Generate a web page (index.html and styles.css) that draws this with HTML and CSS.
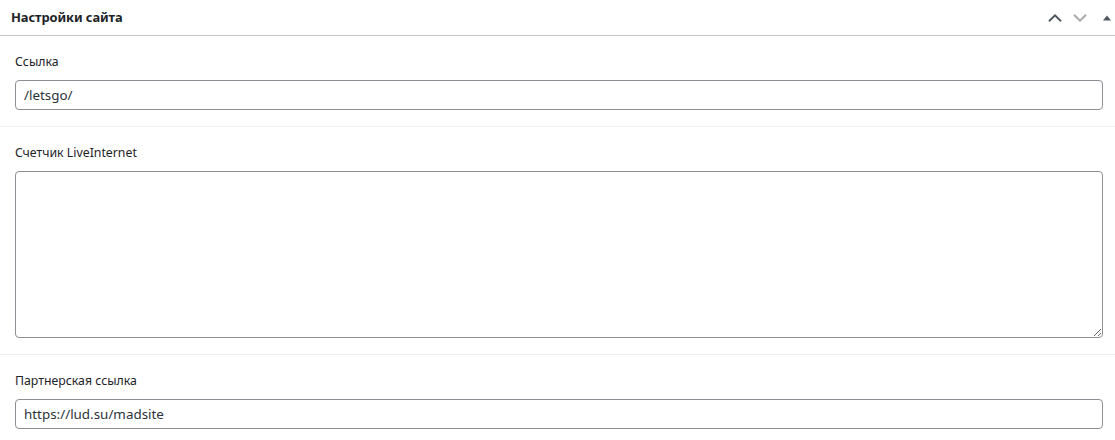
FILE: index.html
```html
<!DOCTYPE html>
<html lang="ru">
<head>
<meta charset="utf-8">
<title>Настройки сайта</title>
<link rel="stylesheet" href="styles.css">
</head>
<body>
<div class="postbox">
  <div class="postbox-header">
    <h2 class="postbox-title">Настройки сайта</h2>
    <div class="handle-actions">
      <button class="handle-btn" type="button" aria-label="Вверх">
        <svg width="14" height="8" viewBox="0 0 14 8"><path d="M1 7.2 L7 1.4 L13 7.2" fill="none" stroke="#50575e" stroke-width="2"/></svg>
      </button>
      <button class="handle-btn" type="button" aria-label="Вниз">
        <svg width="14" height="8" viewBox="0 0 14 8"><path d="M1 0.8 L7 6.6 L13 0.8" fill="none" stroke="#a7aaad" stroke-width="2"/></svg>
      </button>
      <button class="handle-btn toggle" type="button" aria-label="Свернуть">
        <svg width="8" height="6" viewBox="0 0 8 6"><path d="M0 5.5 L4 0.5 L8 5.5 Z" fill="#50575e"/></svg>
      </button>
    </div>
  </div>
  <div class="inside">
    <div class="field">
      <label class="field-label" for="f1">Ссылка</label>
      <input class="text-input" id="f1" type="text" value="/letsgo/">
    </div>
    <div class="field">
      <label class="field-label" for="f2">Счетчик LiveInternet</label>
      <textarea class="text-area" id="f2"></textarea>
    </div>
    <div class="field">
      <label class="field-label" for="f3">Партнерская ссылка</label>
      <input class="text-input" id="f3" type="text" value="https://lud.su/madsite">
    </div>
  </div>
</div>
</body>
</html>
```

FILE: styles.css
```css
html, body {
  margin: 0;
  padding: 0;
  background: #ffffff;
}
body {
  font-family: "Noto Sans", "Open Sans", sans-serif;
  color: #1d2327;
  width: 1115px;
  overflow: hidden;
}
.postbox {
  display: flex;
  flex-direction: column;
}
.postbox-header {
  height: 35px;
  border-bottom: 1px solid #c3c4c7;
  display: flex;
  align-items: center;
  justify-content: space-between;
  padding: 0 4px 0 11px;
}
.postbox-title {
  margin: 0;
  font-size: 12.9px;
  font-weight: 700;
  color: #1d2327;
  line-height: 1.4;
  letter-spacing: -0.1px;
}
.handle-actions {
  display: flex;
  align-items: center;
  height: 100%;
}
.handle-btn {
  border: 0;
  background: transparent;
  padding: 0;
  margin: 0 0 0 11px;
  height: 35px;
  display: flex;
  align-items: center;
  justify-content: center;
  cursor: pointer;
}
.handle-btn svg { display: block; }
.handle-btn.toggle { margin-left: 16px; }
.inside {
  display: flex;
  flex-direction: column;
}
.field {
  display: flex;
  flex-direction: column;
  padding: 16px 12px 16px 15px;
  border-top: 1px solid #eeeeee;
}
.field:first-child { border-top: 0; }
.field-label {
  font-size: 12.3px;
  line-height: 18px;
  color: #1d2327;
  padding-top: 1px;
  margin-bottom: 9px;
}
.text-input {
  box-sizing: border-box;
  width: 100%;
  height: 30px;
  margin: 0;
  padding: 0 8px;
  border: 1px solid #8c8f94;
  border-radius: 4px;
  font-family: "Noto Sans", "Open Sans", sans-serif;
  font-size: 13.4px;
  color: #2c3338;
  background: #fff;
  outline: none;
}
.text-area {
  box-sizing: border-box;
  width: 100%;
  height: 167px;
  margin: 0;
  padding: 2px 6px;
  border: 1px solid #8c8f94;
  border-radius: 4px;
  font-family: "Noto Sans", "Open Sans", sans-serif;
  font-size: 14px;
  color: #2c3338;
  background: #fff;
  resize: vertical;
  outline: none;
}
```
